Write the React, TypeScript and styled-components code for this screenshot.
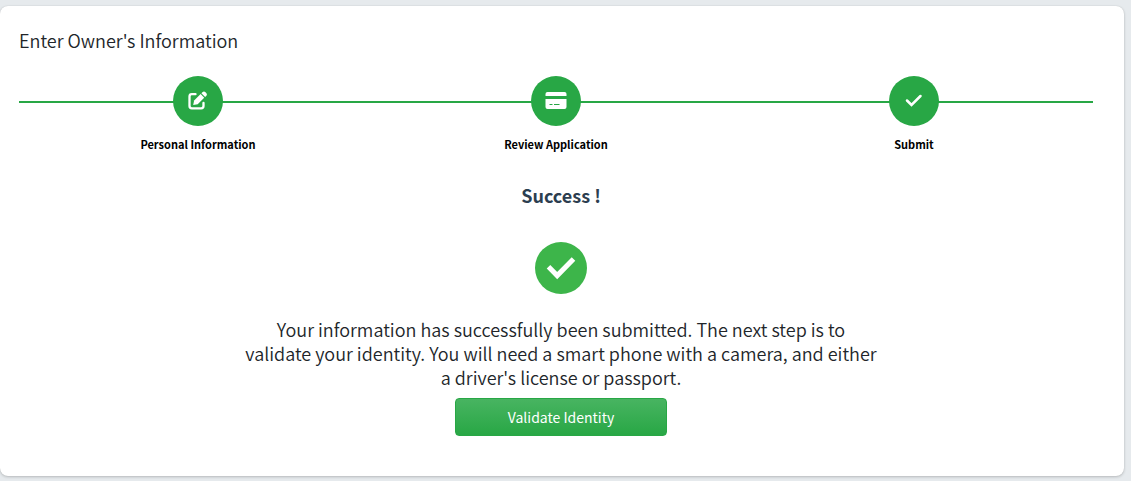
import React from "react";
import styled, { createGlobalStyle } from "styled-components";

const GlobalStyle = createGlobalStyle`
  *, *::before, *::after { box-sizing: border-box; }
  body {
    margin: 0;
    background: #e6eaed;
    color: #212529;
    font-family: "Noto Sans CJK SC", "Noto Sans", sans-serif;
    font-size: 18px;
    line-height: 24px;
  }
`;

const Card = styled.main`
  margin: 6px 7px 5px 0;
  padding: 22px 31px 40px 19px;
  background: #fff;
  border-radius: 8px;
  box-shadow: 0 0 1px rgba(0, 0, 0, 0.13), 0 1px 3px rgba(0, 0, 0, 0.2);
`;

const Title = styled.h1`
  margin: 0;
  font-size: 18px;
  font-weight: 350;
  line-height: 24px;
`;

const Steps = styled.ol`
  display: grid;
  grid-template-columns: repeat(3, 1fr);
  margin: 24px 0 0;
  padding: 0;
  list-style: none;
  background: linear-gradient(#28a745, #28a745) 0 25px / 100% 2px no-repeat;
`;

const Step = styled.li`
  display: flex;
  flex-direction: column;
  align-items: center;
  gap: 10px;
`;

const StepCircle = styled.span`
  display: grid;
  place-items: center;
  width: 50px;
  height: 50px;
  border-radius: 50%;
  background: #28a745;
  color: #fff;
`;

const StepLabel = styled.span`
  color: #000;
  font-size: 11px;
  font-weight: 700;
  line-height: 16px;
`;

const Result = styled.section`
  display: flex;
  flex-direction: column;
  align-items: center;
  padding-left: 10px;
  text-align: center;
`;

const ResultTitle = styled.h2`
  margin: 31px 0 35px;
  color: #2c3e50;
  font-size: 18px;
  font-weight: 700;
  line-height: 24px;
`;

const Message = styled.p`
  max-width: 636px;
  margin: 23px 0 9px;
  font-weight: 350;
`;

const PrimaryButton = styled.button`
  width: 212px;
  height: 38px;
  padding: 0;
  border: 1px solid #28a745;
  border-radius: 4px;
  background: linear-gradient(#48b461, #28a745);
  color: #fff;
  font-family: inherit;
  font-size: 14px;
  font-weight: 400;
  line-height: 24px;
  cursor: pointer;
`;

const EditIcon = () => (
  <svg width="20" height="20" viewBox="0 0 20 20" fill="none" aria-hidden="true">
    <path d="M7.500 3.200H3.800Q1.500 3.200 1.500 5.500V15Q1.500 17.300 3.800 17.300H13.200Q15.500 17.300 15.500 15V12" stroke="currentColor" strokeWidth="2.300" strokeLinecap="round" />
    <path d="M5.200 14L6.100 9.600L12.600 3.100L16.200 6.700L9.700 13.200Z" fill="currentColor" />
    <path d="M13.400 2.300L14.400 1.300Q16 -.2 17.500 1.300L18.200 2Q19.600 3.500 18.200 5L17.100 6Z" fill="currentColor" />
  </svg>
);

const CardIcon = () => (
  <svg width="22" height="18" viewBox="0 0 22 18" fill="currentColor" aria-hidden="true">
    <path d="M2.500 0H19.500Q21.500 0 21.500 2V4H.5V2Q.5 0 2.500 0Z" />
    <path fillRule="evenodd" d="M.5 7H21.500V15Q21.500 17 19.500 17H2.500Q.5 17 .5 15ZM4.500 12V13H7.500V12ZM9 12V13H14.500V12Z" />
  </svg>
);

const CheckIcon = () => (
  <svg width="18" height="14" viewBox="0 0 18 14" fill="none" aria-hidden="true">
    <path d="M2 6.500L6.500 11L15.500 2" stroke="currentColor" strokeWidth="2.500" strokeLinecap="round" strokeLinejoin="miter" />
  </svg>
);

const SuccessIcon = () => (
  <svg width="52" height="52" viewBox="0 0 52 52" role="img" aria-label="Success">
    <circle cx="26" cy="26" r="26" fill="#3db54a" />
    <path d="M13.500 24.800L22.200 33.600L38.500 17.100" fill="none" stroke="#fff" strokeWidth="5" />
  </svg>
);

const steps = [
  { label: "Personal Information", Icon: EditIcon },
  { label: "Review Application", Icon: CardIcon },
  { label: "Submit", Icon: CheckIcon },
];

export default function App() {
  return (
    <>
      <GlobalStyle />
      <Card>
        <Title>Enter Owner's Information</Title>
        <Steps>
          {steps.map(({ label, Icon }) => (
            <Step key={label}>
              <StepCircle><Icon /></StepCircle>
              <StepLabel>{label}</StepLabel>
            </Step>
          ))}
        </Steps>
        <Result>
          <ResultTitle>Success !</ResultTitle>
          <SuccessIcon />
          <Message>
            Your information has successfully been submitted. The next step is to validate your
            identity. You will need a smart phone with a camera, and either a driver's license or
            passport.
          </Message>
          <PrimaryButton type="button">Validate Identity</PrimaryButton>
        </Result>
      </Card>
    </>
  );
}
